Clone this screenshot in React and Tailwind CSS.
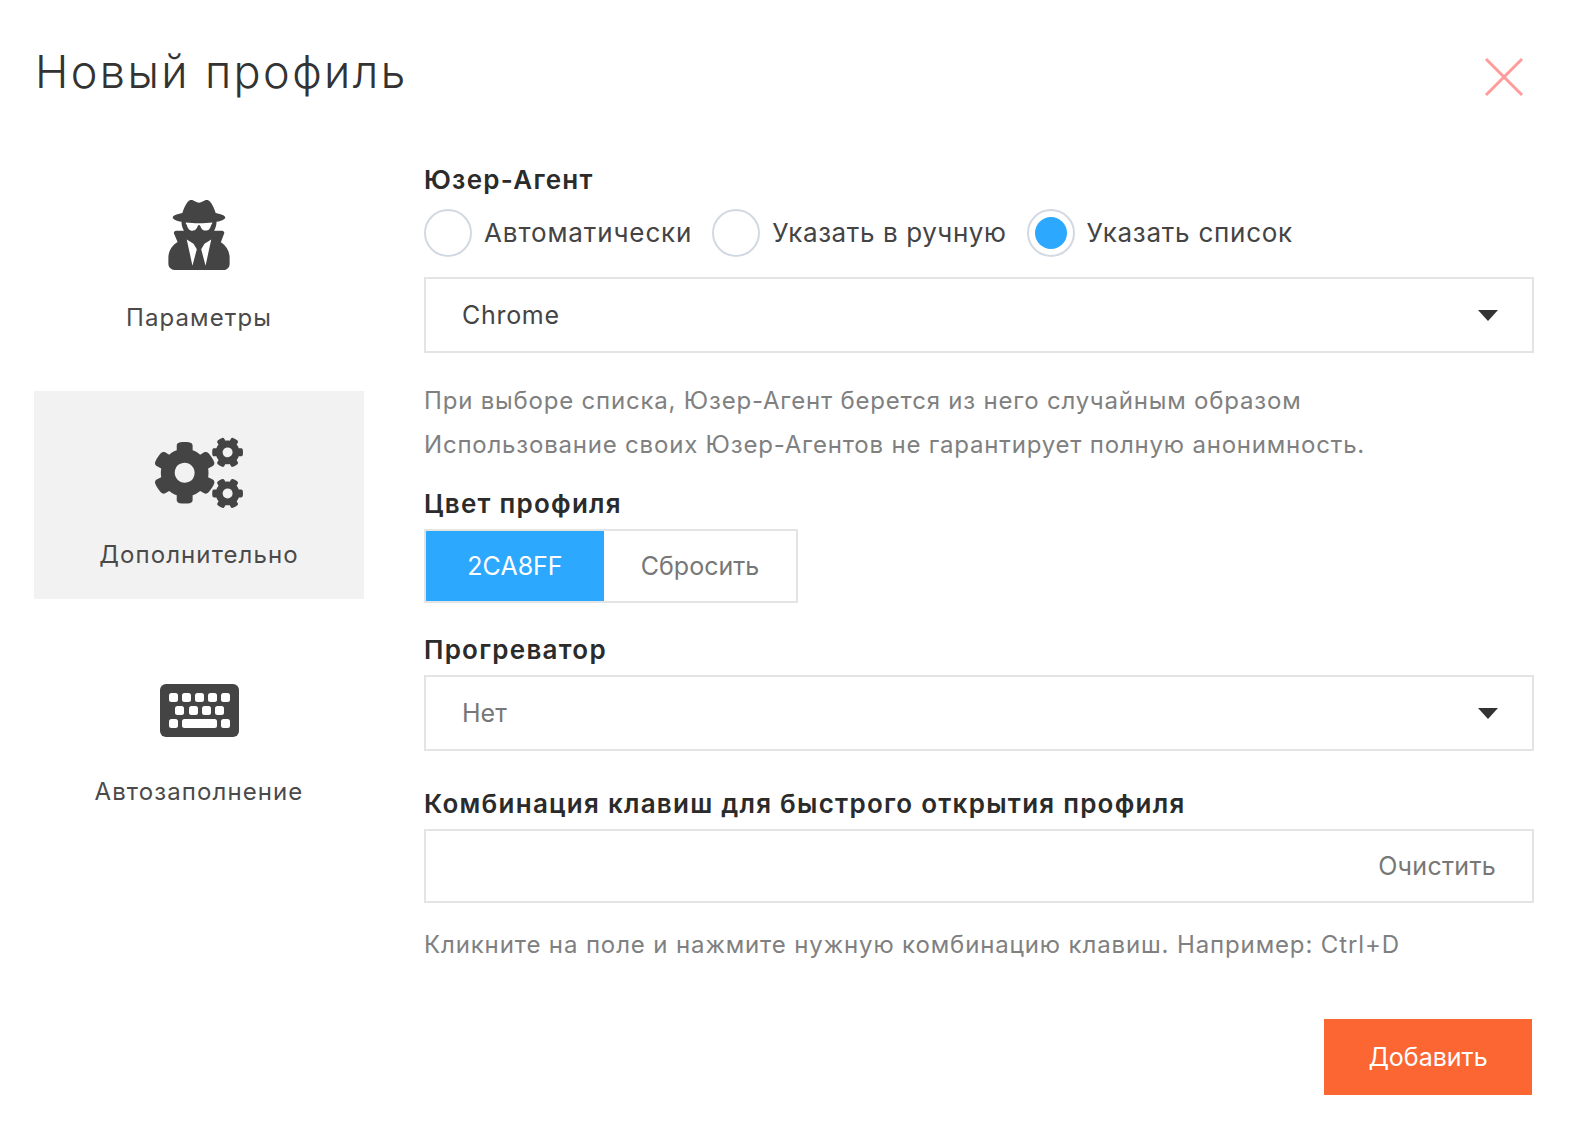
import { FaUserSecret, FaCogs } from "react-icons/fa";

const font = "font-['Inter','Noto_Sans',sans-serif]";

const KeyboardIcon = () => (
  <svg width="79" height="53" viewBox="0 0 79 53" className="mt-[2px]">
    <rect x="0" y="0" width="79" height="53" rx="6" fill="#444" />
    {[9, 22, 35, 48, 61].map((x) => (
      <rect key={x} x={x} y="9" width="9" height="9" rx="2.5" fill="#fff" />
    ))}
    {[15, 29, 42, 55].map((x) => (
      <rect key={x} x={x} y="22" width="9" height="9" rx="2.5" fill="#fff" />
    ))}
    <rect x="9" y="35" width="9" height="9" rx="2.5" fill="#fff" />
    <rect x="22" y="35" width="35" height="9" rx="2.5" fill="#fff" />
    <rect x="61" y="35" width="9" height="9" rx="2.5" fill="#fff" />
  </svg>
);

const SideItem = ({ icon, label, active }) => (
  <div className={`h-[208px] flex flex-col items-center ${active ? "bg-[#f2f2f2]" : ""}`}>
    <div className="h-[118px] pt-[44px] flex items-center justify-center text-[#444]">{icon}</div>
    <p className="mt-[32px] text-[24px] leading-[28px] text-[#4a4a4a] tracking-[1.1px]">{label}</p>
  </div>
);

const Radio = ({ label, checked, tracking }) => (
  <div className="flex items-center">
    <span className="w-[48px] h-[48px] rounded-full border-2 border-[#d3d9e3] flex items-center justify-center">
      {checked && <span className="w-[32px] h-[32px] rounded-full bg-[#2ca8ff]" />}
    </span>
    <span className={`ml-[12px] h-[46px] leading-[46px] text-[26px] text-[#444] ${tracking}`}>{label}</span>
  </div>
);

const Caret = () => (
  <svg width="20" height="11" viewBox="0 0 20 11">
    <path d="M0 0h20L10 11z" fill="#333" />
  </svg>
);

const Select = ({ value, muted }) => (
  <div className="h-[76px] border-2 border-[#e4e4e4] pl-[36px] pr-[34px] flex items-center justify-between">
    <span className={`pt-[2px] text-[25px] ${muted ? "text-[#777]" : "text-[#444] tracking-[0.7px]"}`}>{value}</span>
    <Caret />
  </div>
);

const Heading = ({ children }) => (
  <h3 className="text-[26px] leading-[32px] font-semibold text-[#2b2b2b] tracking-[1.25px]">{children}</h3>
);

export default function App() {
  return (
    <div className={`w-[1574px] h-[1128px] bg-white overflow-hidden pl-[34px] pr-[40px] pt-[44px] ${font}`}>
      <header className="flex items-start justify-between">
        <h1 className="ml-[1px] text-[45px] leading-[56px] font-light text-[#333] tracking-[2.4px]">Новый профиль</h1>
        <svg width="40" height="40" viewBox="0 0 40 40" className="mt-[13px] mr-[10px]">
          <path d="M2 2l36 36M38 2L2 38" stroke="#ff9b9b" strokeWidth="3" fill="none" />
        </svg>
      </header>

      <div className="flex mt-[54px]">
        <aside className="w-[330px] shrink-0 flex flex-col gap-[29px]">
          <SideItem icon={<FaUserSecret size={70} />} label="Параметры" />
          <SideItem icon={<FaCogs size={88} className="mt-[2px]" />} label="Дополнительно" active />
          <SideItem icon={<KeyboardIcon />} label="Автозаполнение" />
        </aside>

        <main className="ml-[60px] flex-1 pt-[10px]">
          <Heading>Юзер-Агент</Heading>
          <div className="flex gap-[20px] mt-[13px]">
            <Radio label="Автоматически" tracking="tracking-[0.88px]" />
            <Radio label="Указать в ручную" tracking="tracking-[0.6px]" />
            <Radio label="Указать список" tracking="tracking-[0.75px]" checked />
          </div>
          <div className="mt-[20px]">
            <Select value="Chrome" />
          </div>
          <p className="mt-[26px] text-[24px] leading-[44px] text-[#808080] tracking-[0.8px]">
            При выборе списка, Юзер-Агент берется из него случайным образом
          </p>
          <p className="text-[24px] leading-[44px] text-[#808080] tracking-[0.8px]">
            Использование своих Юзер-Агентов не гарантирует полную анонимность.
          </p>
          <div className="mt-[21px]">
            <Heading>Цвет профиля</Heading>
          </div>
          <div className="mt-[9px] inline-flex h-[74px] border-2 border-[#e4e4e4]">
            <div className="w-[178px] pt-[2px] bg-[#2ca8ff] text-white text-[25px] flex items-center justify-center">2CA8FF</div>
            <div className="w-[192px] pt-[2px] text-[#777] text-[25px] flex items-center justify-center">Сбросить</div>
          </div>
          <div className="mt-[31px]">
            <Heading>Прогреватор</Heading>
          </div>
          <div className="mt-[9px]">
            <Select value="Нет" muted />
          </div>
          <div className="mt-[37px]">
            <Heading>Комбинация клавиш для быстрого открытия профиля</Heading>
          </div>
          <div className="mt-[9px] h-[74px] border-2 border-[#e4e4e4] pr-[36px] pt-[2px] flex items-center justify-end">
            <span className="text-[25px] text-[#777] tracking-[0.3px]">Очистить</span>
          </div>
          <p className="mt-[20px] text-[24px] leading-[44px] text-[#808080] tracking-[0.87px]">
            Кликните на поле и нажмите нужную комбинацию клавиш. Например: Ctrl+D
          </p>
          <div className="flex justify-end mt-[52px] pr-[2px]">
            <button className="w-[208px] h-[76px] pt-[1px] bg-[#fc6633] text-white text-[25px]">Добавить</button>
          </div>
        </main>
      </div>
    </div>
  );
}
